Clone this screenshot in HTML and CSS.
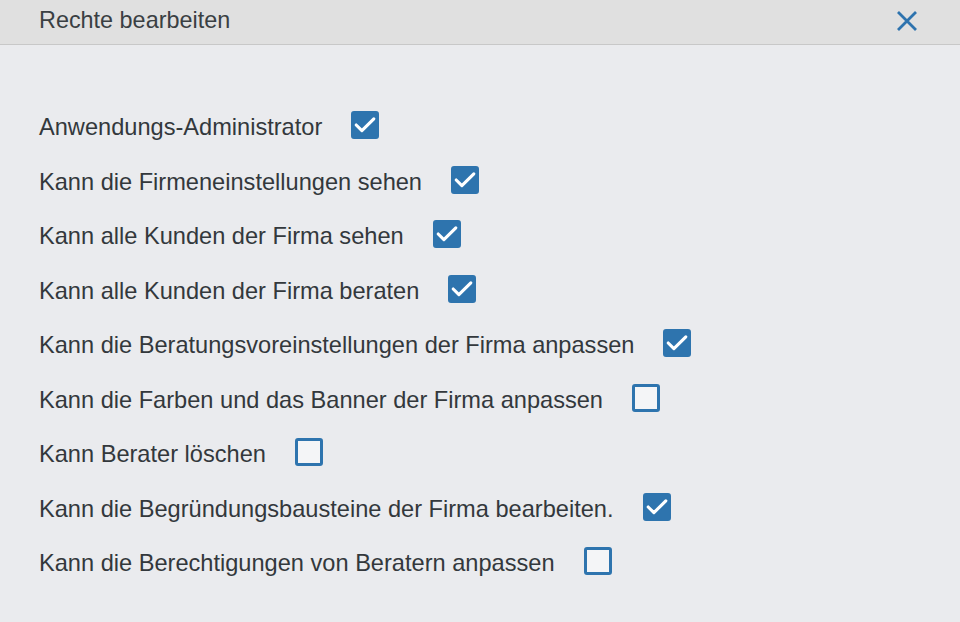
FILE: index.html
```html
<!DOCTYPE html>
<html lang="de">
<head>
<meta charset="utf-8">
<title>Rechte bearbeiten</title>
<link rel="stylesheet" href="styles.css">
</head>
<body>
<div class="dialog">
  <header class="head">
    <h1 class="title">Rechte bearbeiten</h1>
    <button class="close" aria-label="Schließen">
      <svg width="22" height="22" viewBox="0 0 22 22"><path d="M2 2 L20 20 M20 2 L2 20" stroke="#2e73ae" stroke-width="2.8" fill="none"/></svg>
    </button>
  </header>
  <main class="list">
    <label class="row"><span>Anwendungs-Administrator</span><span class="box on"><svg viewBox="0 0 27 27"><path d="M5 13.5 L10.5 19 L22 7.5" stroke="#fff" stroke-width="3" fill="none" stroke-linecap="round" stroke-linejoin="round"/></svg></span></label>
    <label class="row"><span>Kann die Firmeneinstellungen sehen</span><span class="box on"><svg viewBox="0 0 27 27"><path d="M5 13.5 L10.5 19 L22 7.5" stroke="#fff" stroke-width="3" fill="none" stroke-linecap="round" stroke-linejoin="round"/></svg></span></label>
    <label class="row"><span>Kann alle Kunden der Firma sehen</span><span class="box on"><svg viewBox="0 0 27 27"><path d="M5 13.5 L10.5 19 L22 7.5" stroke="#fff" stroke-width="3" fill="none" stroke-linecap="round" stroke-linejoin="round"/></svg></span></label>
    <label class="row"><span>Kann alle Kunden der Firma beraten</span><span class="box on"><svg viewBox="0 0 27 27"><path d="M5 13.5 L10.5 19 L22 7.5" stroke="#fff" stroke-width="3" fill="none" stroke-linecap="round" stroke-linejoin="round"/></svg></span></label>
    <label class="row"><span>Kann die Beratungsvoreinstellungen der Firma anpassen</span><span class="box on"><svg viewBox="0 0 27 27"><path d="M5 13.5 L10.5 19 L22 7.5" stroke="#fff" stroke-width="3" fill="none" stroke-linecap="round" stroke-linejoin="round"/></svg></span></label>
    <label class="row"><span>Kann die Farben und das Banner der Firma anpassen</span><span class="box"></span></label>
    <label class="row"><span>Kann Berater löschen</span><span class="box"></span></label>
    <label class="row"><span>Kann die Begründungsbausteine der Firma bearbeiten.</span><span class="box on"><svg viewBox="0 0 27 27"><path d="M5 13.5 L10.5 19 L22 7.5" stroke="#fff" stroke-width="3" fill="none" stroke-linecap="round" stroke-linejoin="round"/></svg></span></label>
    <label class="row"><span>Kann die Berechtigungen von Beratern anpassen</span><span class="box"></span></label>
  </main>
</div>
</body>
</html>
```
FILE: styles.css
```css
html, body {
  margin: 0;
  padding: 0;
  height: 100%;
}
body {
  background: #eaebee;
  font-family: "Liberation Sans", Arial, Helvetica, sans-serif;
  color: #33383c;
}
.dialog {
  display: flex;
  flex-direction: column;
}
.head {
  height: 45px;
  box-sizing: border-box;
  background: #e0e0e0;
  border-bottom: 1px solid #c8c8c8;
  display: flex;
  align-items: center;
  justify-content: space-between;
  padding: 0 42px 0 39px;
}
.title {
  margin: 0;
  font-size: 23.4px;
  font-weight: normal;
  color: #3a3f43;
  position: relative;
  top: -2px;
}
.close {
  border: 0;
  background: none;
  padding: 0;
  width: 22px;
  height: 22px;
  display: block;
  position: relative;
  top: -1px;
}
.close svg { display: block; }
.list {
  display: flex;
  flex-direction: column;
  padding: 55px 39px 0;
}
.row {
  display: flex;
  align-items: center;
  height: 54.5px;
  gap: 29px;
  font-size: 23.6px;
  line-height: 28px;
}
.box {
  width: 28px;
  height: 28px;
  box-sizing: border-box;
  border: 3px solid #2e74ae;
  border-radius: 3px;
  background: #f4f5f7;
  flex: none;
  position: relative;
  top: -2px;
}
.box.on {
  background: #2e74ae;
  border-color: #2e74ae;
}
.box svg {
  position: absolute;
  left: -3px;
  top: -3px;
  width: 28px;
  height: 28px;
}
```
